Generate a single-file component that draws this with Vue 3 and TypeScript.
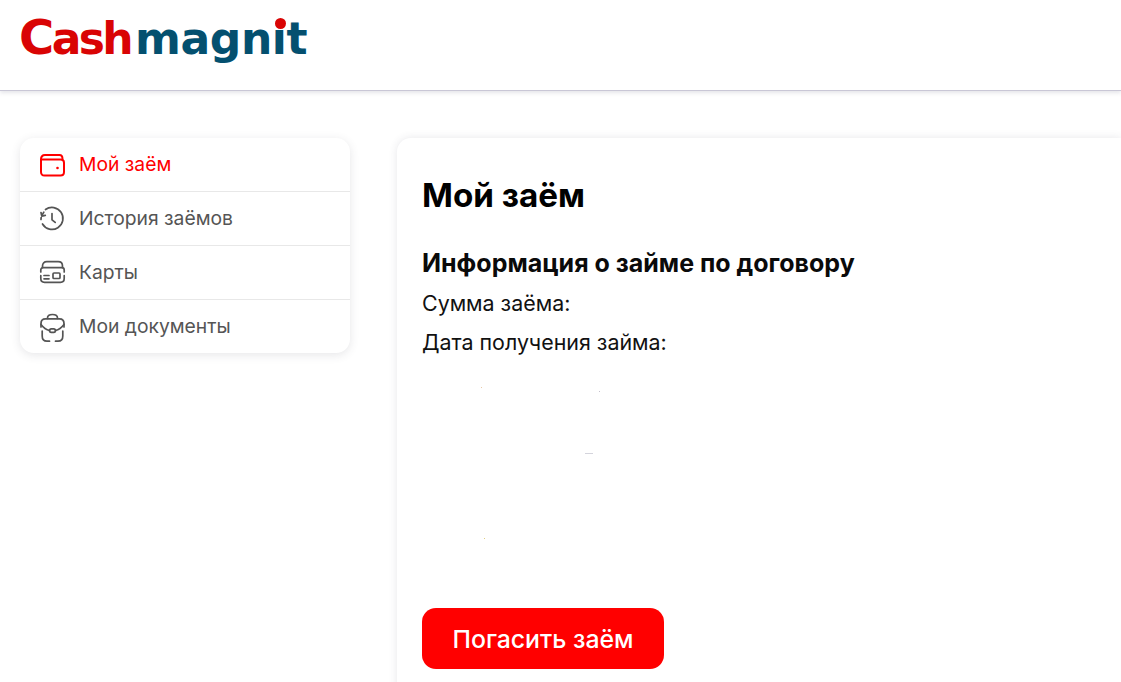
<script setup lang="ts">
const items = [
  { label: 'Мой заём', icon: 'wallet', active: true },
  { label: 'История заёмов', icon: 'history', active: false },
  { label: 'Карты', icon: 'card', active: false },
  { label: 'Мои документы', icon: 'case', active: false },
]
</script>

<template>
  <div class="page">
    <header class="header">
      <div class="logo">
        <span class="cash"><span class="cap">C</span>ash</span><span class="magnit">magnit</span>
        <span class="dot"></span>
      </div>
    </header>
    <div class="content">
      <nav class="menu">
        <a v-for="item in items" :key="item.label" class="row" :class="{ active: item.active }">
          <svg class="icon" viewBox="0 0 25 25" fill="none" stroke="currentColor" stroke-width="1.7" stroke-linecap="round" stroke-linejoin="round">
            <template v-if="item.icon === 'wallet'">
              <path d="M1 7.500C1 4.500 2.500 3 5 3h14.500c2 0 3 1.200 3 4" stroke-width="2" />
              <path d="M1 7.500h19.500c2.300 0 3.500 1.200 3.500 3.200V20c0 2.200-1.200 3.500-3.500 3.500h-16C2.200 23.500 1 22.200 1 20Z" stroke-width="2" />
              <circle cx="17.500" cy="16" r="1.300" fill="currentColor" stroke="none" />
            </template>
            <template v-else-if="item.icon === 'history'">
              <path d="M5.500 3.500A11 11 0 1 1 2.500 18" />
              <path d="M2.500 8.500A11 11 0 0 1 3.800 6.200" />
              <path d="M1 13.500a11 11 0 0 1 .2-2" />
              <path d="M1 6.500l.8 3.600 3.500-.8" />
              <path d="M12 7.500v6.300l3.200 2.600" />
            </template>
            <template v-else-if="item.icon === 'card'">
              <path d="M2.500 7.700V6c0-2.800 1.700-4.300 4.300-4.300h11.400c2.600 0 4.300 1.500 4.300 4.300v1.700" />
              <path d="M.8 12V10c0-1.500.9-2.300 2.300-2.300h18.800c1.400 0 2.300.8 2.300 2.300v2" />
              <path d="M.8 15.500v3c0 2.400 1.400 3.800 3.800 3.800h15.800c2.400 0 3.800-1.400 3.800-3.800v-3" />
              <path d="M4 15.500h5M4 18.800h5" />
              <rect x="13" y="13" width="7" height="5.500" rx="1" />
            </template>
            <template v-else>
              <path d="M7.500 4.500V4c0-2.200 2.200-3.500 5-3.500s5 1.300 5 3.500v.5" />
              <path d="M1 13V9.500C1 6.500 2.800 4.800 5.500 4.800h14c2.700 0 4.500 1.700 4.500 4.700V13" />
              <path d="M1 10.500c3 4 6 5.500 8.500 6M24 10.500c-3 4-6 5.500-8.500 6" />
              <rect x="9.500" y="14.800" width="6" height="3.600" rx="1.800" />
              <path d="M2.200 17v5c0 3.300 1.800 5.200 4.800 5.200h2.500M22.800 17v5c0 3.300-1.800 5.200-4.800 5.200h-2.500" />
            </template>
          </svg>
          <span class="label">{{ item.label }}</span>
        </a>
      </nav>
      <main class="card">
        <h1 class="title">Мой заём</h1>
        <h2 class="subtitle">Информация о займе по договору</h2>
        <p class="line">Сумма заёма:</p>
        <p class="line">Дата получения займа:</p>
        <div class="spacer"></div>
        <button class="pay">Погасить заём</button>
        <i class="speck s1"></i>
        <i class="speck s2"></i>
        <i class="speck s3"></i>
        <i class="speck s4"></i>
      </main>
    </div>
  </div>
</template>

<style>
html, body { margin: 0; background: #fff; overflow: hidden; }
</style>

<style scoped>
.page {
  height: 682px;
  overflow: hidden;
  font-family: Inter, "Noto Sans", sans-serif;
  background: #fff;
}
.header {
  height: 91px;
  box-sizing: border-box;
  padding: 9px 0 0 19px;
  border-bottom: 1px solid #c9c7d6;
  box-shadow: 0 2px 4px rgba(70, 70, 100, 0.14);
}
.logo {
  position: relative;
  display: inline-block;
  font-family: "DejaVu Sans", sans-serif;
  font-weight: 700;
  font-size: 44px;
  line-height: 60px;
}
.cash { color: #d90404; letter-spacing: -2.6px; }
.cap { font-size: 48px; line-height: 1px; }
.magnit { color: #04506f; margin-left: 4px; letter-spacing: -0.4px; }
.dot {
  position: absolute;
  left: 256px;
  top: 9px;
  width: 11px;
  height: 11px;
  border-radius: 50%;
  background: #d90404;
  box-shadow: 0 0 0 1px #fff;
}
.content {
  display: flex;
  align-items: flex-start;
  gap: 47px;
  padding: 47px 0 0 20px;
}
.menu {
  width: 330px;
  flex: none;
  background: #fff;
  border-radius: 14px;
  box-shadow: 0 2px 10px rgba(60, 60, 80, 0.13);
  overflow: hidden;
}
.row {
  height: 54px;
  box-sizing: border-box;
  display: flex;
  align-items: center;
  gap: 14px;
  padding-left: 20px;
  font-size: 19.3px;
  font-weight: 400;
  color: #555;
  border-top: 1px solid #e8e8e8;
}
.row:first-child {
  height: 53px;
  border-top: 0;
}
.row.active { color: #ff0000; }
.label { margin-top: -2px; }
.icon { width: 25px; height: 25px; flex: none; overflow: visible; }
.card {
  position: relative;
  flex: 1;
  height: 600px;
  box-sizing: border-box;
  padding: 37px 25px 0;
  background: #fff;
  border-radius: 14px 0 0 0;
  box-shadow: 0 0 8px rgba(60, 60, 80, 0.12);
}
.title {
  margin: 0 0 32px;
  font-size: 33.2px;
  line-height: 40px;
  font-weight: 700;
  color: #000;
}
.subtitle {
  margin: 0 0 9px;
  font-size: 25px;
  line-height: 32px;
  font-weight: 700;
  color: #0a0a0a;
}
.line {
  margin: 0 0 9px;
  font-size: 21.4px;
  line-height: 30px;
  color: #111;
}
.spacer { height: 242px; }
.pay {
  display: block;
  width: 242px;
  height: 61px;
  border: 0;
  border-radius: 14px;
  background: #ff0000;
  color: #fff;
  font-family: inherit;
  font-size: 24.8px;
  font-weight: 500;
}
.speck { position: absolute; height: 1px; width: 1px; }
.s1 { left: 84px; top: 249px; background: #e8c9a8; }
.s2 { left: 202px; top: 253px; background: #c4c0cc; }
.s3 { left: 188px; top: 315px; width: 8px; background: #d4d4dc; }
.s4 { left: 87px; top: 400px; background: #e0cf80; }
</style>
